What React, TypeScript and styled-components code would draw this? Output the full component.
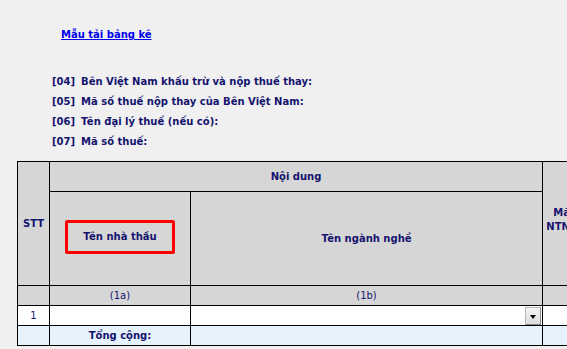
import React from "react";
import styled, { createGlobalStyle } from "styled-components";

const GlobalStyle = createGlobalStyle`
  html, body {
    margin: 0;
    padding: 0;
    background: #f0f0f0;
    overflow: hidden;
  }
  body {
    font-family: "DejaVu Sans", Verdana, sans-serif;
    font-size: 10px;
    color: #14146e;
  }
`;

const Page = styled.div`
  width: 567px;
  height: 349px;
  overflow: hidden;
  padding-top: 28px;
  box-sizing: border-box;
`;

const TemplateLink = styled.a`
  display: inline-block;
  margin-left: 61px;
  font-weight: bold;
  color: #0000ee;
  text-decoration: underline;
  line-height: 14px;
`;

const Fields = styled.div`
  display: flex;
  flex-direction: column;
  margin: 30px 0 0 52px;
`;

const FieldRow = styled.div`
  display: flex;
  gap: 6px;
  height: 20px;
  line-height: 20px;
  font-weight: bold;
  white-space: nowrap;
`;

const TableWrap = styled.div`
  margin: 9px 0 0 17px;
  width: 640px;
`;

const Table = styled.table`
  border-collapse: collapse;
  table-layout: fixed;
  width: 640px;
`;

const Th = styled.th<{ $bold?: boolean; $lift?: number }>`
  border: 1px solid #000;
  background: #d6d6d6;
  color: #14146e;
  font-weight: ${(p) => (p.$bold === false ? "normal" : "bold")};
  font-size: 10px;
  line-height: 14px;
  padding: 0 0 ${(p) => p.$lift ?? 0}px;
  text-align: center;
  vertical-align: middle;
  white-space: nowrap;
`;

const Td = styled.td<{ $tone?: "white" | "total" }>`
  border: 1px solid #000;
  background: ${(p) => (p.$tone === "total" ? "#e6f2fb" : "#ffffff")};
  padding: 0;
  height: 19px;
  font-size: 10px;
  text-align: center;
  color: #14146e;
`;

const TotalLabel = styled.span`
  font-weight: bold;
`;

const RedFrame = styled.div`
  display: flex;
  align-items: center;
  justify-content: center;
  width: 104px;
  height: 28px;
  margin: 0 auto 4px 15px;
  border: 3px solid #ff0000;
  border-radius: 2px;
`;

const SelectBox = styled.div`
  display: flex;
  justify-content: flex-end;
  align-items: center;
  height: 19px;
`;

const DropButton = styled.div`
  display: flex;
  align-items: center;
  justify-content: center;
  width: 14px;
  height: 16px;
  margin-right: 1px;
  background: linear-gradient(#f4f4f4, #dcdcdc);
  border: 1px solid #b8b8b8;
  border-right-color: #8a8a8a;
  border-bottom-color: #8a8a8a;
`;

const Arrow = styled.span`
  width: 0;
  height: 0;
  border-left: 3.5px solid transparent;
  border-right: 3.5px solid transparent;
  border-top: 4px solid #000;
  margin-top: 2px;
`;

const fields = [
  ["[04]", "Bên Việt Nam khấu trừ và nộp thuế thay:"],
  ["[05]", "Mã số thuế nộp thay của Bên Việt Nam:"],
  ["[06]", "Tên đại lý thuế (nếu có):"],
  ["[07]", "Mã số thuế:"],
];

export default function App() {
  return (
    <Page>
      <GlobalStyle />
      <TemplateLink href="#">Mẫu tải bảng kê</TemplateLink>
      <Fields>
        {fields.map(([code, label]) => (
          <FieldRow key={code}>
            <span>{code}</span>
            <span>{label}</span>
          </FieldRow>
        ))}
      </Fields>
      <TableWrap>
        <Table>
          <colgroup>
            <col style={{ width: 32 }} />
            <col style={{ width: 141 }} />
            <col style={{ width: 352 }} />
            <col style={{ width: 84 }} />
            <col style={{ width: 31 }} />
          </colgroup>
          <tbody>
            <tr style={{ height: 30 }}>
              <Th rowSpan={2}>STT</Th>
              <Th colSpan={2}>Nội dung</Th>
              <Th rowSpan={2} $lift={8}>
                Mã số thuế
                <br />
                NTNN tại Việt
              </Th>
              <Th rowSpan={2}></Th>
            </tr>
            <tr style={{ height: 94 }}>
              <Th>
                <RedFrame>Tên nhà thầu</RedFrame>
              </Th>
              <Th>Tên ngành nghề</Th>
            </tr>
            <tr style={{ height: 20 }}>
              <Th $bold={false}></Th>
              <Th $bold={false}>(1a)</Th>
              <Th $bold={false}>(1b)</Th>
              <Th $bold={false}></Th>
              <Th $bold={false}></Th>
            </tr>
            <tr style={{ height: 20 }}>
              <Td>1</Td>
              <Td></Td>
              <Td>
                <SelectBox>
                  <DropButton>
                    <Arrow />
                  </DropButton>
                </SelectBox>
              </Td>
              <Td></Td>
              <Td></Td>
            </tr>
            <tr style={{ height: 20 }}>
              <Td $tone="total"></Td>
              <Td $tone="total">
                <TotalLabel>Tổng cộng:</TotalLabel>
              </Td>
              <Td $tone="total"></Td>
              <Td $tone="total"></Td>
              <Td $tone="total"></Td>
            </tr>
          </tbody>
        </Table>
      </TableWrap>
    </Page>
  );
}
